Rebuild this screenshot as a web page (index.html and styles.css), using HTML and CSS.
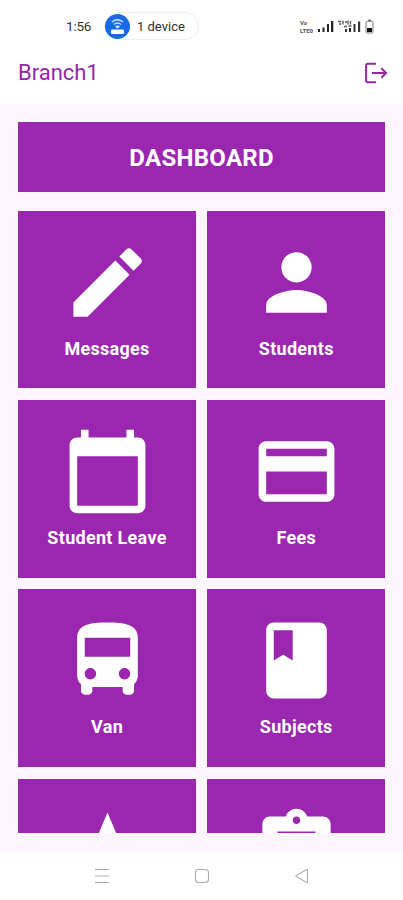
FILE: index.html
```
<!DOCTYPE html>
<html lang="en">
<head>
<meta charset="utf-8">
<meta name="viewport" content="width=device-width, initial-scale=1">
<title>Dashboard</title>
<link rel="stylesheet" href="styles.css">
</head>
<body>
<div class="phone">
  <div class="status">
    <span class="time">1:56</span>
    <div class="device">
      <svg class="hotspot" viewBox="0 0 25 25"><circle cx="12.5" cy="12.5" r="12.5" fill="#1769e8"/><rect x="6" y="15.5" width="13" height="4.5" rx="1.3" fill="#fff"/><path d="M7 8q5.500-4.500 11 0M9 10.500q3.500-3 7 0" fill="none" stroke="#c9e1ff" stroke-width="1.500"/><path d="M10 12.500q2.500-2 5 0l-2.500 2z" fill="#d9eaff"/></svg>
      <span>1 device</span>
    </div>
    <div class="signals">
      <div class="rate"><span>Vo</span><span>LTE0</span></div>
      <svg class="bars" viewBox="0 0 17 14"><path d="M1 10h2v3H1zM5.500 8.500h2V13h-2zM10 5h2v8h-2zM14 2h2.300v11H14z" fill="#222"/></svg>
      <svg class="bars-two" viewBox="0 0 23 15"><path d="M7 10h2v3H7zM11 9h2v4h-2zM15.500 5h2v8h-2zM20 2.500h2.200V13H20z" fill="#333"/><path d="M0 2.500h3M1 5h2M5 1.500v4M7 3h2M10 1.500v4M12.500 2v3.500M6 7.500h3M10.500 7h3" stroke="#555" stroke-width="1.300"/></svg>
      <svg class="battery" viewBox="0 0 9 15"><path d="M3 .7h3v1.500H3z" fill="#666"/><rect x="1" y="2.300" width="7" height="11.700" rx="1.300" fill="#fff" stroke="#777"/><path d="M2 9h5v4H2z" fill="#111"/></svg>
    </div>
  </div>
  <header class="appbar">
    <span class="branch">Branch1</span>
    <svg class="logout" viewBox="0 0 24 22" fill="none" stroke="#9527a8" stroke-width="1.900"><path d="M12 1.700H4Q2 1.700 2 3.700v14.600q0 2 2 2h8M8 11h14M17.300 6.200 22.200 11l-4.900 4.800"/></svg>
  </header>
  <main class="content">
    <h1 class="title">DASHBOARD</h1>
    <div class="grid">
      <div class="card"><svg viewBox="0 0 24 24"><path d="M3 17.250V21h3.750L17.810 9.940l-3.750-3.750L3 17.250zM20.710 7.040a1 1 0 0 0 0-1.410l-2.340-2.340a1 1 0 0 0-1.410 0l-1.830 1.830 3.750 3.750 1.830-1.830z"/></svg><span>Messages</span></div>
      <div class="card"><svg viewBox="0 0 24 24"><path d="M12 12c2.210 0 4-1.790 4-4s-1.790-4-4-4-4 1.790-4 4 1.790 4 4 4zm0 2c-2.670 0-8 1.340-8 4v2h16v-2c0-2.660-5.330-4-8-4z"/></svg><span>Students</span></div>
      <div class="card"><svg viewBox="0 0 24 24"><path d="M20 3h-1V1h-2v2H7V1H5v2H4c-1.100 0-2 .9-2 2v16c0 1.100.9 2 2 2h16c1.100 0 2-.9 2-2V5c0-1.100-.9-2-2-2zm0 18H4V8h16v13z"/></svg><span>Student Leave</span></div>
      <div class="card"><svg viewBox="0 0 24 24"><path d="M20 4H4c-1.110 0-1.990.89-1.990 2L2 18c0 1.110.89 2 2 2h16c1.110 0 2-.89 2-2V6c0-1.110-.89-2-2-2zm0 14H4v-6h16v6zm0-10H4V6h16v2z"/></svg><span>Fees</span></div>
      <div class="card"><svg viewBox="0 0 24 24"><path d="M4 16c0 .88.390 1.670 1 2.220V20c0 .55.450 1 1 1h1c.55 0 1-.45 1-1v-1h8v1c0 .55.450 1 1 1h1c.55 0 1-.45 1-1v-1.780c.61-.55 1-1.340 1-2.220V6c0-3.500-3.580-4-8-4s-8 .5-8 4v10zm3.500 1c-.83 0-1.500-.67-1.500-1.500S6.670 14 7.500 14s1.500.67 1.500 1.500S8.330 17 7.500 17zm9 0c-.83 0-1.500-.67-1.500-1.500s.67-1.500 1.500-1.500 1.500.67 1.500 1.500-.67 1.500-1.500 1.500zm1.500-6H6V6h12v5z"/></svg><span>Van</span></div>
      <div class="card"><svg viewBox="0 0 24 24"><path d="M18 2H6c-1.100 0-2 .9-2 2v16c0 1.100.9 2 2 2h12c1.100 0 2-.9 2-2V4c0-1.100-.9-2-2-2zM6 4h5v8l-2.500-1.500L6 12V4z"/></svg><span>Subjects</span></div>
      <div class="card"><svg viewBox="0 0 24 24"><path d="M12 17.270 18.180 21l-1.640-7.030L22 9.240l-7.190-.61L12 2 9.190 8.630 2 9.240l5.460 4.730L5.820 21z"/></svg></div>
      <div class="card"><svg viewBox="0 0 24 24"><path d="M19 3h-4.180C14.400 1.840 13.300 1 12 1s-2.400.84-2.820 2H5c-1.100 0-2 .9-2 2v14c0 1.100.9 2 2 2h14c1.100 0 2-.9 2-2V5c0-1.100-.9-2-2-2zm-7 0c.55 0 1 .45 1 1s-.45 1-1 1-1-.45-1-1 .45-1 1-1zm2 14H7v-2h7v2zm3-4H7v-2h10v2zm0-4H7V7h10v2z"/></svg></div>
    </div>
  </main>
  <nav class="navbar">
    <svg viewBox="0 0 16 16"><path d="M1 1.500h14M1 8h14M1 14.500h14"/></svg>
    <svg viewBox="0 0 16 16"><rect x="1.500" y="1.500" width="13" height="13" rx="3"/></svg>
    <svg viewBox="0 0 16 16"><path d="M13.500 2v12q0 .7-.7.4L2 8.400q-.5-.4 0-.8l10.800-6q.7-.3.700.4z"/></svg>
  </nav>
</div>
</body>
</html>
```
FILE: styles.css
```
* { box-sizing: border-box; }
body { margin: 0; background: #fff; font-family: Roboto, "Liberation Sans", sans-serif; }
.phone { width: 403px; height: 900px; display: flex; flex-direction: column; overflow: hidden; }
svg { display: block; flex: none; }

.status { height: 52px; flex: none; display: flex; align-items: center; padding: 0 29px 0 66px; color: #333; }
.time { width: 38px; font-size: 13.5px; letter-spacing: -0.2px; }
.device { display: flex; align-items: center; gap: 7px; width: 95px; height: 28px; border: 1px solid #eee; border-radius: 14px; font-size: 13px; white-space: nowrap; }
.hotspot { width: 25px; height: 25px; }
.signals { margin-left: auto; display: flex; align-items: center; gap: 4px; }
.rate { display: flex; flex-direction: column; gap: 1px; font-size: 6px; line-height: 7px; font-weight: 700; color: #555; }
.bars { width: 17px; height: 14px; }
.bars-two { width: 23px; height: 15px; }
.battery { width: 9px; height: 15px; }

.appbar { height: 52px; flex: none; display: flex; align-items: flex-start; justify-content: space-between; padding: 8px 15px 0 18px; }
.branch { font-size: 22px; line-height: 26px; color: #9527a8; letter-spacing: 0; }
.logout { width: 24px; height: 22px; margin-top: 2px; }

.content { height: 748px; flex: none; background: #fdf6fe; padding: 18.3px 18px 19px 18.3px; display: flex; flex-direction: column; gap: 18.5px; }
.title { margin: 0; height: 70px; flex: none; background: #9b27b0; color: #fff; font-size: 24px; letter-spacing: 0.3px; font-weight: 700; line-height: 72px; text-align: center; }
.grid { flex: 1; min-height: 0; overflow: hidden; display: grid; grid-template-columns: 1fr 1fr; grid-auto-rows: 177.6px; gap: 11.7px; }
.card { background: #9b27b0; color: #fff; display: flex; flex-direction: column; align-items: center; padding-top: 26px; }
.card svg { width: 91px; height: 91px; fill: #fff; }
.card span { margin-top: 10px; font-size: 18px; letter-spacing: 0.3px; line-height: 22px; font-weight: 700; }

.navbar { flex: 1; display: flex; justify-content: center; gap: 84px; padding-top: 16px; }
.navbar svg { width: 16px; height: 16px; fill: none; stroke: #aaa; stroke-width: 1.1; }
```
